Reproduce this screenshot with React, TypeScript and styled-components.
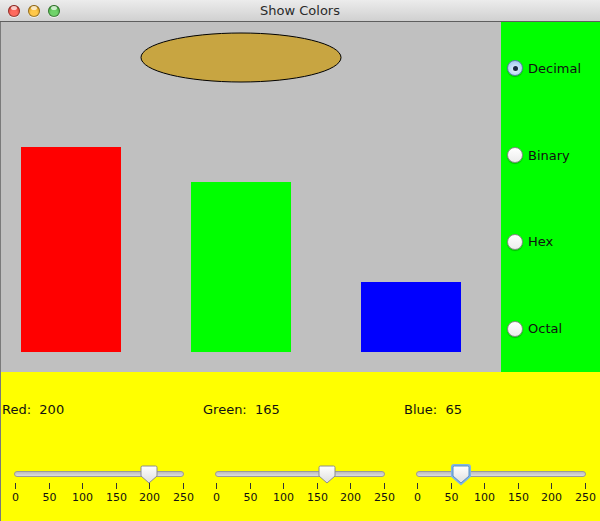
import React from "react";
import styled, { createGlobalStyle } from "styled-components";

const Global = createGlobalStyle`
  html, body { margin: 0; padding: 0; background: #fff; }
  body { font-family: "Lucida Grande", "DejaVu Sans", "Liberation Sans", sans-serif; }
`;

const Window = styled.div`
  width: 600px;
  height: 521px;
  display: flex;
  flex-direction: column;
  overflow: hidden;
`;

const TitleBar = styled.div`
  height: 21px;
  border-bottom: 1px solid #5e5e5e;
  background: linear-gradient(#ececec, #d0d0d0);
  display: flex;
  align-items: center;
  position: relative;
`;

const Lights = styled.div`
  display: flex;
  gap: 8px;
  padding-left: 8px;
`;

const Light = styled.span<{ $c: string; $d: string }>`
  width: 12px;
  height: 12px;
  border-radius: 50%;
  background: radial-gradient(circle at 50% 70%, ${(p) => p.$c} 30%, ${(p) => p.$d} 100%);
  box-shadow: inset 0 0 0 1px rgba(0,0,0,0.35), 0 1px 0 rgba(255,255,255,0.6);
  position: relative;
  &::after {
    content: "";
    position: absolute;
    left: 3px;
    top: 1px;
    width: 6px;
    height: 4px;
    border-radius: 50%;
    background: rgba(255,255,255,0.7);
  }
`;

const Title = styled.div`
  position: absolute;
  left: 0;
  right: 0;
  text-align: center;
  font-size: 13px;
  color: #2a2a2a;
  pointer-events: none;
`;

const Content = styled.div`
  flex: 1;
  display: flex;
  flex-direction: column;
  border-left: 1px solid #7a7a7a;
`;

const TopRow = styled.div`
  height: 350px;
  display: flex;
`;

const Canvas = styled.svg`
  width: 500px;
  height: 350px;
  display: block;
  background: #c0c0c0;
`;

const RadioPanel = styled.div`
  flex: 1;
  background: #00ff00;
  display: grid;
  grid-template-rows: repeat(4, 1fr);
  padding-top: 3px;
`;

const RadioRow = styled.label`
  display: flex;
  align-items: center;
  gap: 5px;
  padding-left: 6px;
  font-size: 13px;
  color: #111;
`;

const RadioDot = styled.span<{ $on: boolean }>`
  width: 14px;
  height: 14px;
  border-radius: 50%;
  border: 1px solid ${(p) => (p.$on ? "#5a7fa8" : "#8a8a8a")};
  background: ${(p) =>
    p.$on
      ? "radial-gradient(circle at 50% 60%, #e8f3ff 0%, #a9cdf2 70%, #7fb0e0 100%)"
      : "linear-gradient(#ffffff, #ececec)"};
  display: flex;
  align-items: center;
  justify-content: center;
  box-shadow: 0 1px 1px rgba(0,0,0,0.25);
  &::after {
    content: "";
    width: 5px;
    height: 5px;
    border-radius: 50%;
    background: #1a2a40;
    display: ${(p) => (p.$on ? "block" : "none")};
  }
`;

const Bottom = styled.div`
  flex: 1;
  background: #ffff00;
  display: grid;
  grid-template-columns: 201px 201px 1fr;
`;

const Column = styled.div`
  display: flex;
  flex-direction: column;
  padding-top: 30px;
`;

const ValueLabel = styled.div`
  font-size: 13px;
  color: #111;
  white-space: pre;
  padding-left: 1px;
  height: 16px;
  line-height: 16px;
`;

const SliderBox = styled.div`
  margin-top: 53px;
  margin-left: 14px;
  width: 168px;
  position: relative;
`;

const Track = styled.div`
  height: 4px;
  margin: 0 -1px;
  border-radius: 3px;
  background: linear-gradient(#bdbdbd, #dcdcdc);
  border: 1px solid #9a9a9a;
`;

const Thumb = styled.svg<{ $left: number }>`
  position: absolute;
  top: -6px;
  left: ${(p) => p.$left - 9}px;
  overflow: visible;
`;

const Ticks = styled.div`
  position: relative;
  height: 24px;
  margin-top: 6px;
`;

const Tick = styled.div<{ $x: number }>`
  position: absolute;
  left: ${(p) => p.$x}px;
  top: 0;
  width: 1px;
  height: 6px;
  background: #333;
`;

const TickLabel = styled.div<{ $x: number }>`
  position: absolute;
  left: ${(p) => p.$x}px;
  top: 9px;
  transform: translateX(-50%);
  font-size: 11px;
  color: #111;
  line-height: 12px;
`;

const TICKS = [0, 50, 100, 150, 200, 250];
const W = 168;

function Slider({ value, focused }: { value: number; focused?: boolean }) {
  const pos = (value / 250) * W;
  return (
    <SliderBox>
      <Track />
      <Thumb $left={pos} width="18" height="19" viewBox="0 0 18 19">
        {focused && (
          <path
            d="M2 0.5 H16 Q17.5 0.5 17.5 2 V11 L9 18.5 L0.5 11 V2 Q0.5 0.5 2 0.5 Z"
            fill="none"
            stroke="#7fb6e6"
            strokeWidth="3"
          />
        )}
        <defs>
          <linearGradient id={`tg${value}`} x1="0" y1="0" x2="0" y2="1">
            <stop offset="0" stopColor="#ffffff" />
            <stop offset="1" stopColor="#dedede" />
          </linearGradient>
        </defs>
        <path
          d="M2.5 1 H15.5 Q17 1 17 2.5 V11 L9 18 L1 11 V2.5 Q1 1 2.5 1 Z"
          fill={`url(#tg${value})`}
          stroke={focused ? "#5a8fc4" : "#8c8c8c"}
          strokeWidth="1"
        />
      </Thumb>
      <Ticks>
        {TICKS.map((t) => {
          const x = Math.round((t / 250) * W);
          return (
            <React.Fragment key={t}>
              <Tick $x={x} />
              <TickLabel $x={x + 0.5}>{t}</TickLabel>
            </React.Fragment>
          );
        })}
      </Ticks>
    </SliderBox>
  );
}

const radios = ["Decimal", "Binary", "Hex", "Octal"];

export default function App() {
  return (
    <Window>
      <Global />
      <TitleBar>
        <Lights>
          <Light $c="#ff6b5f" $d="#b3201a" />
          <Light $c="#ffc84a" $d="#b97d0b" />
          <Light $c="#6fd36a" $d="#2a8a22" />
        </Lights>
        <Title>Show Colors</Title>
      </TitleBar>
      <Content>
        <TopRow>
          <Canvas viewBox="0 0 500 350">
            <ellipse cx="240" cy="35.5" rx="100" ry="24.5" fill="#c8a541" stroke="#000" strokeWidth="1" />
            <rect x="20" y="125" width="100" height="205" fill="#ff0000" />
            <rect x="190" y="160" width="100" height="170" fill="#00ff00" />
            <rect x="360" y="260" width="100" height="70" fill="#0000ff" />
          </Canvas>
          <RadioPanel>
            {radios.map((r, i) => (
              <RadioRow key={r}>
                <RadioDot $on={i === 0} />
                {r}
              </RadioRow>
            ))}
          </RadioPanel>
        </TopRow>
        <Bottom>
          <Column>
            <ValueLabel>{"Red:  200"}</ValueLabel>
            <Slider value={200} />
          </Column>
          <Column>
            <ValueLabel>{"Green:  165"}</ValueLabel>
            <Slider value={165} />
          </Column>
          <Column>
            <ValueLabel>{"Blue:  65"}</ValueLabel>
            <Slider value={65} focused />
          </Column>
        </Bottom>
      </Content>
    </Window>
  );
}
